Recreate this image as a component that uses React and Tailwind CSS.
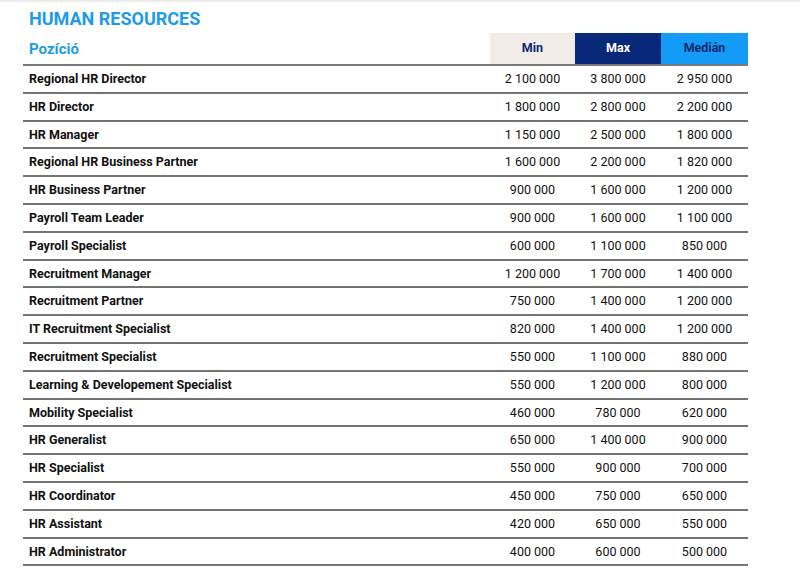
import React from "react";

const rows = [
  ["Regional HR Director", "2 100 000", "3 800 000", "2 950 000"],
  ["HR Director", "1 800 000", "2 800 000", "2 200 000"],
  ["HR Manager", "1 150 000", "2 500 000", "1 800 000"],
  ["Regional HR Business Partner", "1 600 000", "2 200 000", "1 820 000"],
  ["HR Business Partner", "900 000", "1 600 000", "1 200 000"],
  ["Payroll Team Leader", "900 000", "1 600 000", "1 100 000"],
  ["Payroll Specialist", "600 000", "1 100 000", "850 000"],
  ["Recruitment Manager", "1 200 000", "1 700 000", "1 400 000"],
  ["Recruitment Partner", "750 000", "1 400 000", "1 200 000"],
  ["IT Recruitment Specialist", "820 000", "1 400 000", "1 200 000"],
  ["Recruitment Specialist", "550 000", "1 100 000", "880 000"],
  ["Learning & Developement Specialist", "550 000", "1 200 000", "800 000"],
  ["Mobility Specialist", "460 000", "780 000", "620 000"],
  ["HR Generalist", "650 000", "1 400 000", "900 000"],
  ["HR Specialist", "550 000", "900 000", "700 000"],
  ["HR Coordinator", "450 000", "750 000", "650 000"],
  ["HR Assistant", "420 000", "650 000", "550 000"],
  ["HR Administrator", "400 000", "600 000", "500 000"],
];

const App = () => {
  return (
    <div className="w-[800px] h-[585px] bg-white overflow-hidden font-['Roboto',sans-serif] border-t-2 border-[#ececec]">
      <h1 className="pl-[29px] pt-[6px] h-[31px] text-[18px] font-bold text-[#1e9be9] leading-[22px]">
        HUMAN RESOURCES
      </h1>
      <div className="ml-[23px] w-[725px]">
        {/* header */}
        <div className="flex h-[33px] border-b-2 border-[#7a7a7a]">
          <div className="w-[467px] flex items-center pl-[6px] pt-[2px] text-[15px] font-bold text-[#1e9be9]">
            Pozíció
          </div>
          <div className="w-[85px] bg-[#f1ece8] flex items-center justify-center text-[12.5px] font-bold text-[#0d2a6e]">
            Min
          </div>
          <div className="w-[86px] bg-[#08287a] flex items-center justify-center text-[12.5px] font-bold text-white">
            Max
          </div>
          <div className="w-[87px] bg-[#139bf7] flex items-center justify-center text-[12.5px] font-bold text-[#0d2a6e]">
            Medián
          </div>
        </div>
        {rows.map((r, idx) => (
          <div
            key={idx}
            className="flex h-[27.8px] items-center pt-[1px] border-b-2 border-[#737373] text-[12.5px] text-[#111]"
          >
            <div className="w-[467px] pl-[6px] font-bold">{r[0]}</div>
            <div className="w-[85px] text-center">{r[1]}</div>
            <div className="w-[86px] text-center">{r[2]}</div>
            <div className="w-[87px] text-center">{r[3]}</div>
          </div>
        ))}
      </div>
    </div>
  );
};

export default App;
